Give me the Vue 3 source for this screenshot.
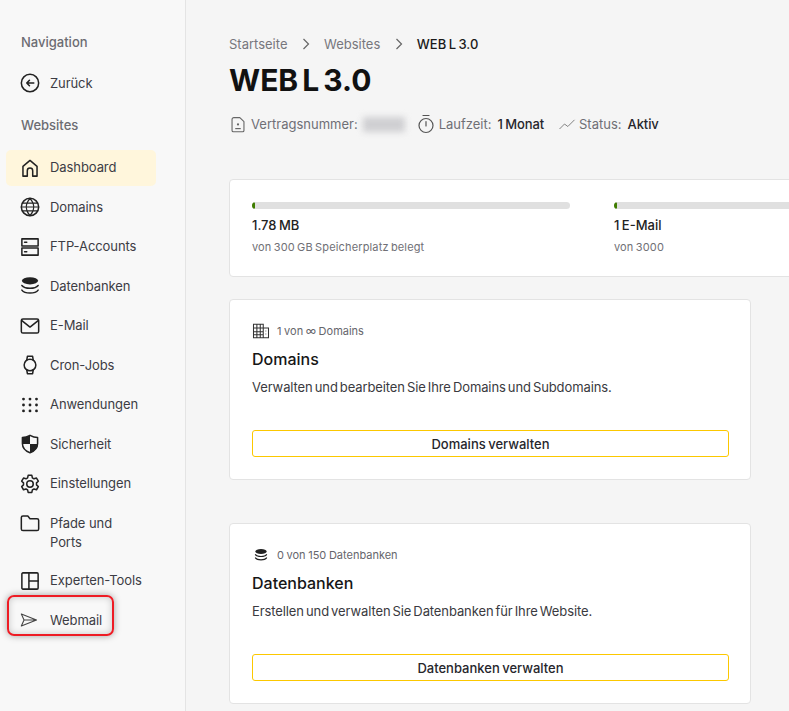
<script setup>
const s = 'fill="none" stroke="#222" stroke-width="1.4" stroke-linecap="round" stroke-linejoin="round"'
const thin = 'fill="none" stroke="#222" stroke-width="1.1" stroke-linecap="round" stroke-linejoin="round"'
const ico = {
  back: `<circle cx="12" cy="12" r="8" ${s}/><path d="M15.500 12H9M11.500 9.500 9 12l2.500 2.500" ${s}/>`,
  home: `<path d="M5.500 19.500v-9L12 5l6.500 5.500v9h-4v-5a2.500 2.500 0 0 0-5 0v5z" ${s}/>`,
  globe: `<circle cx="12" cy="12" r="8" ${s}/><path d="M4 12h16M5 8.500h14M5 15.500h14M12 4c-4.500 5-4.500 11 0 16M12 4c4.500 5 4.500 11 0 16" ${thin}/>`,
  ftp: `<path d="M4.500 4.500h15v6.500h-15zM4.500 13h15v6.500h-15zM7 7.700h2M7 16.300h2" ${s}/>`,
  db: `<ellipse cx="12" cy="7.200" rx="7.500" ry="3.300" fill="#222"/><path d="M4.500 11.500c1.500 2 4.500 2.600 7.500 2.600s6-.6 7.500-2.600M4.500 15.800c1.500 2 4.500 2.700 7.500 2.700s6-.7 7.500-2.700" ${s}/>`,
  mail: `<rect x="4" y="5.500" width="16" height="13" rx="1.500" ${s}/><path d="m4.500 7 7.500 6 7.500-6" ${s}/>`,
  watch: `<circle cx="12" cy="12" r="5.400" ${s}/><path d="m9 7.500.6-3.500h4.800l.6 3.500M9 16.500l.6 3.500h4.800l.6-3.500" ${s}/>`,
  grid: [6.5, 12, 17.5].flatMap(y => [6, 12, 18].map(x => `<circle cx="${x}" cy="${y}" r="1.300" fill="#222"/>`)).join(''),
  shield: `<path d="M12 4c2.500 1.400 4.800 2 7 2v5.500c0 4.200-2.800 7-7 8.500-4.200-1.500-7-4.300-7-8.500V6c2.200 0 4.500-.6 7-2z" ${s}/><path d="M12 4v8H5V6c2.200 0 4.500-.6 7-2zM12 12h7c0 4-2.800 6.900-7 8z" fill="#222"/>`,
  gear: `<circle cx="12" cy="12" r="3" ${s}/><path d="M10.300 4h3.400l.5 2.300 1.500.9 2.300-.7 1.700 2.900-1.700 1.600v1.800l1.700 1.600-1.700 2.900-2.300-.7-1.500.9-.5 2.300h-3.400l-.5-2.300-1.500-.9-2.300.7-1.700-2.900 1.700-1.600v-1.800L4.300 9.400 6 6.500l2.300.7 1.500-.9z" ${s}/>`,
  folder: `<path d="M4 7a1.500 1.500 0 0 1 1.500-1.500H10l2 2.500h6.500A1.500 1.500 0 0 1 20 9.500v8a1.500 1.500 0 0 1-1.500 1.500h-13A1.500 1.500 0 0 1 4 17.500z" ${s}/>`,
  layout: `<rect x="4.500" y="4.500" width="15" height="15" rx="1" ${s}/><path d="M11 4.500v15M11 12h8.500" ${s}/>`,
  send: `<path d="M4 6.500 18 12 4 17.500 6.500 12zM6.500 12H18" fill="none" stroke="#444" stroke-width="1" stroke-linejoin="round"/>`,
  doc: `<path d="M5.500 7a2 2 0 0 1 2-2h6.500l4.500 4.500V19a1.500 1.500 0 0 1-1.500 1.500h-10A1.500 1.500 0 0 1 5.500 19z" fill="none" stroke="#666" stroke-width="1.200" stroke-linejoin="round"/><circle cx="12" cy="12.500" r="1.200" fill="#666"/><path d="M9 17h6" stroke="#666" stroke-width="1.300"/>`,
  timer: `<circle cx="12" cy="13.500" r="7" fill="none" stroke="#555" stroke-width="1.200"/><path d="M9 3.500h6M12 9.500v4.500" stroke="#555" stroke-width="1.200" stroke-linecap="round"/>`,
  trend: `<path d="m3 18 6-6 4 3 8-8" fill="none" stroke="#777" stroke-width="1.100"/>`,
  building: `<path d="M2 3h13v18H2zM15 8h7v13h-7zM2 8h13M2 13h13M2 17h13M6.500 3v18M11 3v18" fill="none" stroke="#333" stroke-width="1.400"/><path d="M18 12h1M18 16h1" stroke="#333" stroke-width="1.500"/>`
}
const navItems = [
  { label: 'Dashboard', icon: 'home', active: true },
  { label: 'Domains', icon: 'globe' },
  { label: 'FTP-Accounts', icon: 'ftp' },
  { label: 'Datenbanken', icon: 'db' },
  { label: 'E-Mail', icon: 'mail' },
  { label: 'Cron-Jobs', icon: 'watch' },
  { label: 'Anwendungen', icon: 'grid' },
  { label: 'Sicherheit', icon: 'shield' },
  { label: 'Einstellungen', icon: 'gear' },
  { label: 'Pfade und Ports', icon: 'folder' },
  { label: 'Experten-Tools', icon: 'layout' },
  { label: 'Webmail', icon: 'send', marked: true }
]
const stats = [
  { value: '1.78 MB', note: 'von 300 GB Speicherplatz belegt' },
  { value: '1 E-Mail', note: 'von 3000' }
]
const cards = [
  { icon: 'building', count: '1 von ∞ Domains', title: 'Domains', text: 'Verwalten und bearbeiten Sie Ihre Domains und Subdomains.', action: 'Domains verwalten' },
  { icon: 'db', count: '0 von 150 Datenbanken', title: 'Datenbanken', text: 'Erstellen und verwalten Sie Datenbanken für Ihre Website.', action: 'Datenbanken verwalten' }
]
</script>

<template>
  <div class="page">
    <aside class="sidebar">
      <div class="heading">Navigation</div>
      <div class="item back">
        <svg class="icon" viewBox="0 0 24 24" v-html="ico.back"></svg>
        <span>Zurück</span>
      </div>
      <div class="heading second">Websites</div>
      <nav class="nav">
        <div v-for="n in navItems" :key="n.label" class="item" :class="{ active: n.active }">
          <svg class="icon" viewBox="0 0 24 24" v-html="ico[n.icon]"></svg>
          <span class="label">{{ n.label }}</span>
          <div v-if="n.marked" class="marker"></div>
        </div>
      </nav>
    </aside>
    <main class="main">
      <div class="crumbs">
        <span>Startseite</span>
        <svg class="chev" viewBox="0 0 8 12"><path d="m1.500 1 5 5-5 5" fill="none" stroke="#666" stroke-width="1.200"/></svg>
        <span>Websites</span>
        <svg class="chev" viewBox="0 0 8 12"><path d="m1.500 1 5 5-5 5" fill="none" stroke="#666" stroke-width="1.200"/></svg>
        <span class="current">WEB L 3.0</span>
      </div>
      <h1 class="title">WEB L 3.0</h1>
      <div class="meta">
        <svg class="metaicon doc" viewBox="0 0 24 24" v-html="ico.doc"></svg>
        <span class="key">Vertragsnummer:</span>
        <span class="blurred"></span>
        <svg class="metaicon timer" viewBox="0 0 24 24" v-html="ico.timer"></svg>
        <span class="key">Laufzeit:</span>
        <span class="val">1 Monat</span>
        <svg class="metaicon trend" viewBox="0 0 24 24" v-html="ico.trend"></svg>
        <span class="key">Status:</span>
        <span class="val">Aktiv</span>
      </div>
      <section class="panel stats">
        <div v-for="st in stats" :key="st.value" class="stat">
          <div class="track"><div class="fill"></div></div>
          <div class="value">{{ st.value }}</div>
          <div class="note">{{ st.note }}</div>
        </div>
      </section>
      <section v-for="c in cards" :key="c.title" class="panel card">
        <div class="count">
          <svg class="counticon" viewBox="0 0 24 24" v-html="ico[c.icon]"></svg>
          <span>{{ c.count }}</span>
        </div>
        <h2 class="cardtitle">{{ c.title }}</h2>
        <p class="text">{{ c.text }}</p>
        <button class="btn">{{ c.action }}</button>
      </section>
    </main>
  </div>
</template>

<style scoped>
.page {
  display: flex;
  width: 789px;
  height: 711px;
  overflow: hidden;
  background: #f5f5f5;
  font-family: Inter, "Liberation Sans", sans-serif;
  color: #222;
}
.sidebar {
  flex: none;
  width: 185px;
  height: 711px;
  background: #f8f8f8;
  border-right: 1px solid #e4e4e4;
  padding-top: 34px;
}
.heading {
  padding-left: 21px;
  font-size: 13px;
  font-weight: 500;
  line-height: 17px;
  color: #6c6c72;
}
.heading.second { margin-top: 16px; }
.item {
  position: relative;
  display: flex;
  align-items: flex-start;
  width: 150px;
  min-height: 36px;
  margin-left: 6px;
  padding: 8.5px 12px 7.5px 0;
  box-sizing: border-box;
  border-radius: 5px;
  font-size: 13px;
  line-height: 19px;
  letter-spacing: -0.08px;
  color: #3c3c44;
}
.back { margin-top: 14px; }
.nav {
  display: flex;
  flex-direction: column;
  gap: 3.5px;
  margin-top: 15.6px;
}
.active { background: #fff6dc; }
.icon {
  flex: none;
  width: 26px;
  height: 26px;
  margin: -3.5px 7px -3.5px 11px;
}
.label { display: block; }
.marker {
  position: absolute;
  left: 1px;
  top: -7px;
  width: 107px;
  height: 41px;
  box-sizing: border-box;
  border: 2px solid #ee1c25;
  border-radius: 7px;
  box-shadow: 0 0 7px rgba(0, 0, 0, 0.35), inset 0 0 7px rgba(0, 0, 0, 0.2);
}
.main {
  flex: none;
  width: 603px;
  padding: 35px 0 0 43px;
  box-sizing: border-box;
}
.crumbs {
  display: flex;
  align-items: center;
  height: 17px;
  font-size: 13px;
  color: #77777d;
  word-spacing: -1px;
}
.chev {
  width: 8px;
  height: 12px;
  margin: 0 14.25px;
}
.current {
  color: #1a1a1a;
  font-weight: 500;
}
.title {
  margin: 10px 0 0;
  font-size: 30px;
  line-height: 36px;
  font-weight: 700;
  word-spacing: -3px;
  color: #111;
}
.meta {
  display: flex;
  align-items: center;
  height: 20px;
  margin-top: 16px;
  font-size: 13px;
}
.metaicon {
  flex: none;
  width: 22px;
  height: 22px;
}
.doc { margin: 0 2.5px 0 -2.5px; }
.timer {
  width: 24px;
  height: 24px;
  margin: 0 0.5px 0 9.5px;
}
.trend {
  width: 20px;
  height: 20px;
  margin: 0 2.5px 0 12.5px;
}
.key { color: #6f6f75; margin-right: 6px; }
.val {
  color: #26262c;
  font-weight: 500;
  letter-spacing: -0.1px;
  word-spacing: -1px;
}
.blurred {
  width: 42px;
  height: 15px;
  margin-left: -1px;
  background: #cfcfd2;
  filter: blur(3px);
}
.panel {
  background: #fff;
  border: 1px solid #e3e3e3;
  border-radius: 4px;
  box-sizing: border-box;
}
.stats {
  display: flex;
  gap: 44px;
  width: 760px;
  height: 98px;
  margin-top: 45px;
  padding: 22px 22px 0;
}
.stat { flex: none; width: 318px; }
.track {
  height: 7px;
  border-radius: 4px;
  background: #e0e0e0;
  overflow: hidden;
}
.fill {
  width: 3px;
  height: 7px;
  border-radius: 4px;
  background: #3f7d00;
}
.value {
  margin-top: 7px;
  font-size: 13px;
  line-height: 18px;
  font-weight: 500;
  word-spacing: -1px;
  color: #222;
}
.note {
  margin-top: 5px;
  font-size: 11px;
  line-height: 16px;
  letter-spacing: 0.15px;
  word-spacing: -1px;
  color: #707076;
}
.card {
  width: 522px;
  height: 181px;
  margin-top: 22px;
  padding: 21.5px 21px 0 22px;
}
.card + .card { margin-top: 43px; }
.count {
  display: flex;
  align-items: center;
  height: 18px;
  font-size: 11px;
  word-spacing: -0.5px;
  color: #66666c;
}
.counticon {
  flex: none;
  width: 18px;
  height: 18px;
  margin-right: 7px;
}
.cardtitle {
  margin: 8.5px 0 0;
  font-size: 16px;
  line-height: 22px;
  font-weight: 500;
  color: #161616;
}
.text {
  margin: 8px 0 0;
  font-size: 13px;
  line-height: 18px;
  letter-spacing: -0.1px;
  word-spacing: -1.5px;
  color: #3a3a40;
}
.btn {
  display: block;
  width: 100%;
  height: 27px;
  margin-top: 34px;
  padding: 0;
  background: #fff;
  border: 1px solid #fcc800;
  border-radius: 3px;
  font-family: inherit;
  font-size: 13px;
  font-weight: 500;
  word-spacing: -1px;
  color: #26262c;
}
</style>
